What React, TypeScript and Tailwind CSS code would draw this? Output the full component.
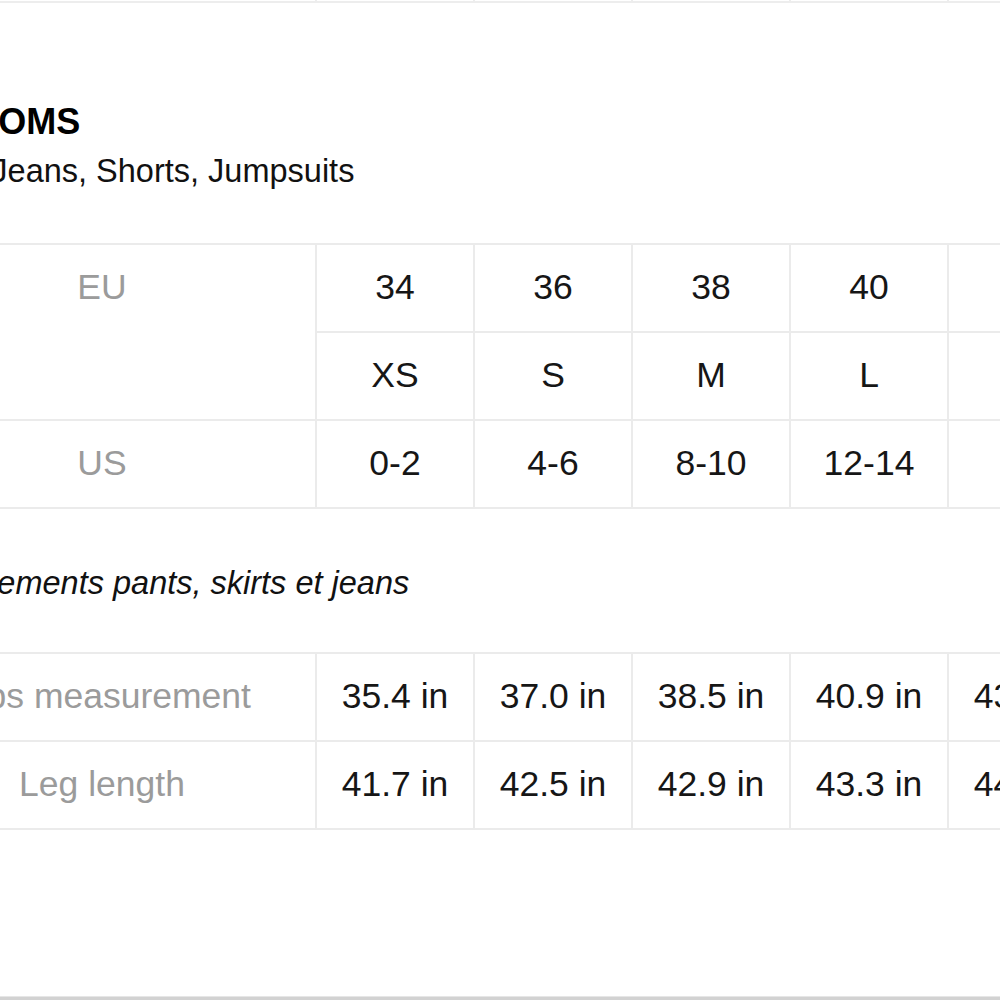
import React from "react";

const COLS = "grid-cols-[426px_repeat(6,156px)]";

function Cell({ children, label, className = "" }: { children?: React.ReactNode; label?: boolean; className?: string }) {
  return (
    <div
      className={`bg-white flex items-center justify-center h-[86px] text-[35.5px] leading-none whitespace-nowrap ${
        label ? "text-[#9b9b9b]" : "text-[#161616]"
      } ${className}`}
    >
      {children}
    </div>
  );
}

export default function App() {
  const eu = ["34", "36", "38", "40", "42", "44"];
  const letters = ["XS", "S", "M", "L", "XL", "XXL"];
  const us = ["0-2", "4-6", "8-10", "12-14", "16", "18"];
  const hips = ["35.4 in", "37.0 in", "38.5 in", "40.9 in", "43.3 in", "45.7 in"];
  const leg = ["41.7 in", "42.5 in", "42.9 in", "43.3 in", "44.1 in", "44.5 in"];

  return (
    <div
      className="w-[1000px] h-[1000px] overflow-hidden bg-white flex flex-col relative"
      style={{ fontFamily: '"Liberation Sans", Arial, sans-serif' }}
    >
      {/* bottom of previous table */}
      <div className={`grid ${COLS} gap-[2px] bg-[#ededed] px-[2px] pb-[2px] ml-[-113px] mt-[-40px] w-max`}>
        {Array.from({ length: 7 }).map((_, i) => (
          <div key={i} className="bg-white h-[41px]" />
        ))}
      </div>

      <h1 className="ml-[-99px] mt-[99px] text-[36px] leading-[40px] font-bold text-black whitespace-nowrap">
        BOTTOMS
      </h1>
      <p className="ml-[-108px] mt-[9px] text-[32.5px] leading-[40px] text-[#111] whitespace-nowrap">
        Skirts, Jeans, Shorts, Jumpsuits
      </p>

      <div className={`grid ${COLS} gap-[2px] bg-[#ebebeb] p-[2px] ml-[-113px] mt-[52px] w-max`}>
        <div className="row-span-2 bg-white flex justify-center">
          <div className="h-[86px] flex items-center text-[35.5px] leading-none text-[#9b9b9b]">EU</div>
        </div>
        {eu.map((v) => (
          <Cell key={"eu" + v}>{v}</Cell>
        ))}
        {letters.map((v) => (
          <Cell key={"l" + v}>{v}</Cell>
        ))}
        <Cell label>US</Cell>
        {us.map((v) => (
          <Cell key={"us" + v}>{v}</Cell>
        ))}
      </div>

      <p className="ml-[-111px] mt-[54px] text-[32.5px] leading-[40px] italic text-[#111] whitespace-nowrap">
        Measurements pants, skirts et jeans
      </p>

      <div className={`grid ${COLS} gap-[2px] bg-[#ebebeb] p-[2px] ml-[-113px] mt-[49px] w-max`}>
        <Cell label>Hips measurement</Cell>
        {hips.map((v, i) => (
          <Cell key={"h" + i}>{v}</Cell>
        ))}
        <Cell label>Leg length</Cell>
        {leg.map((v, i) => (
          <Cell key={"g" + i}>{v}</Cell>
        ))}
      </div>

      <div className="absolute left-0 right-0 bottom-0 h-[4px] bg-[#d2d2d2] border-t border-[#e6e6e6]" />
    </div>
  );
}
